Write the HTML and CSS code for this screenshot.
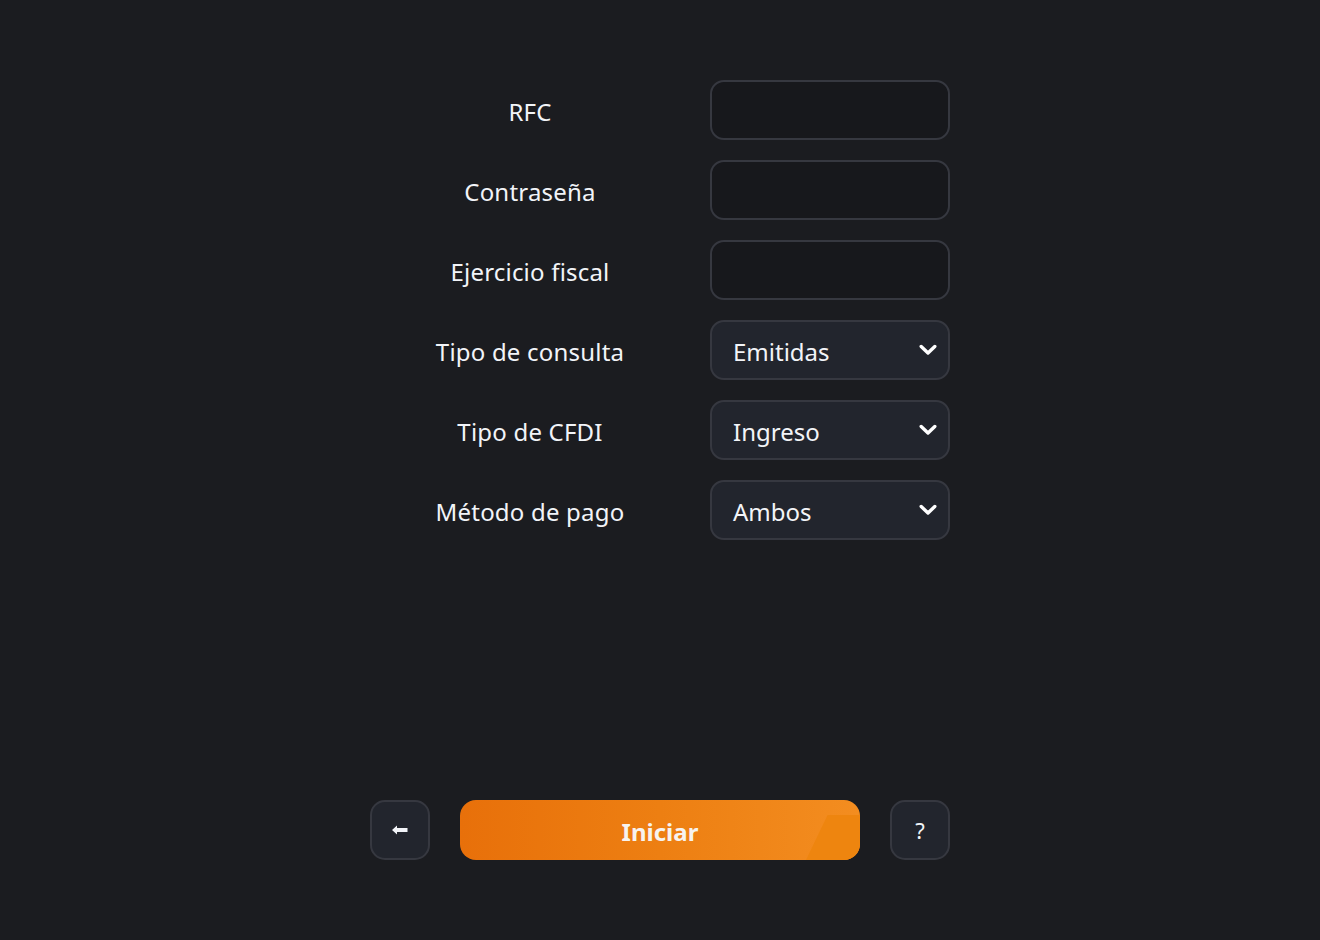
FILE: index.html
```html
<!DOCTYPE html>
<html lang="es">
<head>
<meta charset="utf-8">
<title>Consulta CFDI</title>
<link rel="stylesheet" href="styles.css">
</head>
<body>
<main class="app">
  <form class="form">
    <label class="label" for="rfc">RFC</label>
    <input class="field" id="rfc" type="text">
    <label class="label" for="pwd">Contraseña</label>
    <input class="field" id="pwd" type="password">
    <label class="label" for="ej">Ejercicio fiscal</label>
    <input class="field" id="ej" type="text">
    <label class="label" for="tc">Tipo de consulta</label>
    <div class="select" id="tc"><span>Emitidas</span><svg class="chev" viewBox="0 0 18 12" width="18" height="12"><path d="M2.2 2.5 L9 9 L15.8 2.5" fill="none" stroke="#ffffff" stroke-width="3.4" stroke-linecap="round" stroke-linejoin="round"/></svg></div>
    <label class="label" for="cf">Tipo de CFDI</label>
    <div class="select" id="cf"><span>Ingreso</span><svg class="chev" viewBox="0 0 18 12" width="18" height="12"><path d="M2.2 2.5 L9 9 L15.8 2.5" fill="none" stroke="#ffffff" stroke-width="3.4" stroke-linecap="round" stroke-linejoin="round"/></svg></div>
    <label class="label" for="mp">Método de pago</label>
    <div class="select" id="mp"><span>Ambos</span><svg class="chev" viewBox="0 0 18 12" width="18" height="12"><path d="M2.2 2.5 L9 9 L15.8 2.5" fill="none" stroke="#ffffff" stroke-width="3.4" stroke-linecap="round" stroke-linejoin="round"/></svg></div>
  </form>
  <div class="actions">
    <button class="icon-btn" type="button" aria-label="Volver"><svg viewBox="0 0 18 12" width="18" height="12"><path d="M1 6 L6 1.5 L6 4 L16.5 4 L16.5 8 L6 8 L6 10.5 Z" fill="#f2f4f8"/></svg></button>
    <button class="primary" type="button">Iniciar</button>
    <button class="icon-btn q" type="button">?</button>
  </div>
</main>
</body>
</html>
```
FILE: styles.css
```css
html, body {
  margin: 0;
  padding: 0;
  background: #1b1c20;
  font-family: "Segoe UI", "Noto Sans", "Open Sans", sans-serif;
  color: #f2f4f8;
}
.app {
  box-sizing: border-box;
  width: 580px;
  margin: 0 auto;
  padding-top: 80px;
  display: flex;
  flex-direction: column;
  height: 860px;
}
.form {
  display: grid;
  grid-template-columns: 320px 240px;
  column-gap: 20px;
  row-gap: 20px;
  grid-auto-rows: 60px;
  align-items: center;
}
.label {
  text-align: center;
  font-size: 24px;
  letter-spacing: 0.2px;
  padding-top: 2px;
  color: #f2f4f8;
}
.field, .select {
  box-sizing: border-box;
  height: 60px;
  width: 240px;
  border: 2px solid #363840;
  border-radius: 14px;
  background: #17181c;
  margin: 0;
  font-family: inherit;
  font-size: 24px;
  color: #f2f4f8;
  outline: none;
}
.select {
  background: #22252d;
  display: flex;
  align-items: center;
  justify-content: space-between;
  padding: 2px 11px 0 21px;
}
.chev { display: block; margin-top: -2px; }
.actions {
  margin-top: auto;
  display: flex;
  gap: 30px;
  height: 60px;
}
.icon-btn {
  box-sizing: border-box;
  width: 60px;
  height: 60px;
  border: 2px solid #363840;
  border-radius: 15px;
  background: #22252d;
  color: #f2f4f8;
  display: flex;
  align-items: center;
  justify-content: center;
  padding: 0;
  font-family: inherit;
  font-size: 22px;
}
.primary {
  position: relative;
  overflow: hidden;
  width: 400px;
  height: 60px;
  border: none;
  border-radius: 16px;
  background: linear-gradient(90deg, #e8700a 0%, #ed7f12 50%, #f38d20 100%);
  color: #f7f3ef;
  font-family: inherit;
  font-size: 24px;
  font-weight: 700;
  padding: 2px 0 0;
}
.primary::after {
  content: "";
  position: absolute;
  right: 0;
  bottom: 0;
  width: 54px;
  height: 45px;
  background: #ee850f;
  clip-path: polygon(40% 0, 100% 0, 100% 100%, 0 100%);
}
```
